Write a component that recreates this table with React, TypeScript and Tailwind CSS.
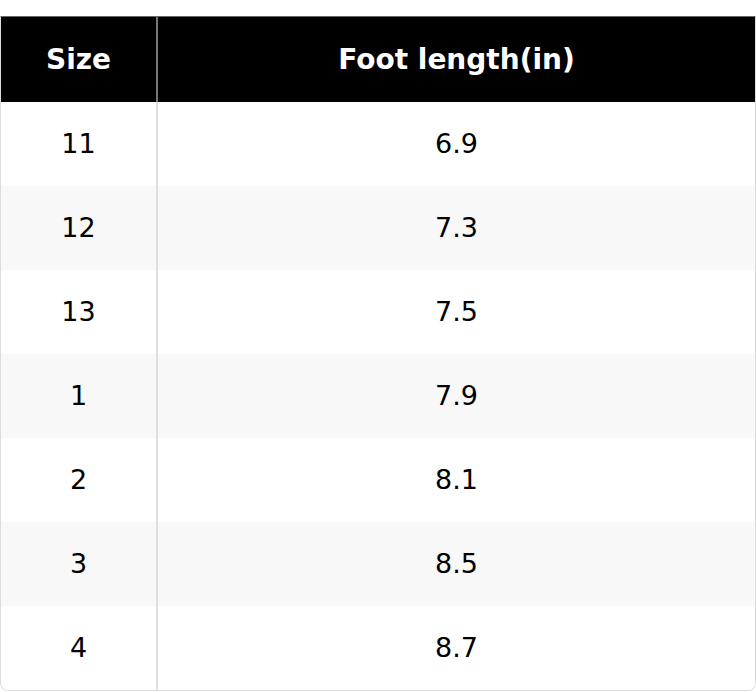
import React from 'react';

const rows = [
  { size: '11', length: '6.9' },
  { size: '12', length: '7.3' },
  { size: '13', length: '7.5' },
  { size: '1', length: '7.9' },
  { size: '2', length: '8.1' },
  { size: '3', length: '8.5' },
  { size: '4', length: '8.7' },
];

export default function App() {
  return (
    <div className="bg-white pt-4 w-[756px] h-[692px]" style={{ fontFamily: '"DejaVu Sans", sans-serif' }}>
      <div className="border border-[#dcdcdc] border-t-[#666] rounded-b-lg overflow-hidden">
        <div className="flex bg-black text-white font-bold text-[28px] h-[85px]">
          <div className="w-[157px] flex items-center justify-center border-r-2 border-[#777]">Size</div>
          <div className="flex-1 flex items-center justify-center">Foot length(in)</div>
        </div>
        {rows.map((row, i) => (
          <div
            key={row.size}
            className={`flex text-[27px] text-black h-[84px] ${i % 2 === 1 ? 'bg-[#f8f8f8]' : 'bg-white'}`}
          >
            <div className="w-[157px] flex items-center justify-center border-r-2 border-[#dedede]">{row.size}</div>
            <div className="flex-1 flex items-center justify-center">{row.length}</div>
          </div>
        ))}
      </div>
    </div>
  );
}
